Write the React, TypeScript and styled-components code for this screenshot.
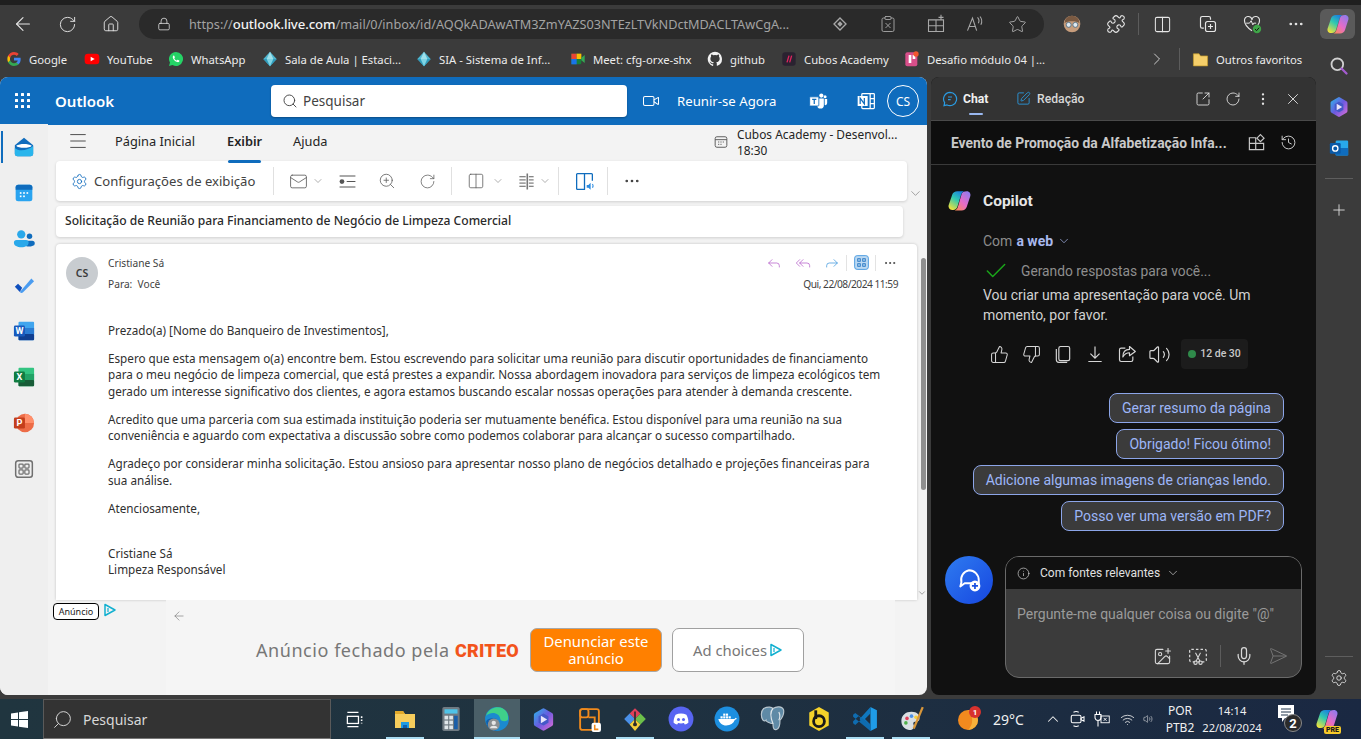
import { useId } from 'react'
import type { ReactNode } from 'react'
import styled, { createGlobalStyle } from 'styled-components'
import {
  ArrowLeft,
  Check,
  ChevronDown,
  ChevronRight,
  ChevronUp,
  ClipboardX,
  Columns2,
  Ellipsis,
  EllipsisVertical,
  Forward,
  History,
  House,
  ImagePlus,
  Info,
  Lock,
  Mail,
  Menu,
  Mic,
  Plus,
  Puzzle,
  Reply,
  ReplyAll,
  RotateCw,
  Search,
  SendHorizontal,
  Settings,
  SquareArrowOutUpRight,
  SquarePen,
  Star,
  ThumbsDown,
  ThumbsUp,
  Video,
  Volume2,
  Wifi,
  X,
  ZoomIn,
} from 'lucide-react'

const SEGOE = '"Noto Sans", "Open Sans", sans-serif'
const ROBOTO = 'Roboto, "Noto Sans", sans-serif'

const GlobalStyle = createGlobalStyle`
  html, body {
    margin: 0;
    padding: 0;
    overflow: hidden;
    background: #3b3b3b;
  }
  * {
    box-sizing: border-box;
  }
`

const Page = styled.div`
  width: 1361px;
  height: 739px;
  display: flex;
  flex-direction: column;
  overflow: hidden;
  background: #3b3b3b;
  font-family: ${SEGOE};
`

const Gap = styled.div<{ $w: number }>`
  width: ${p => p.$w}px;
  flex: none;
`

/* browser chrome */

const TabStrip = styled.div`
  height: 5px;
  flex: none;
  background: #1f1f1f;
`

const BrowserBar = styled.div`
  height: 38px;
  flex: none;
  display: flex;
  align-items: center;
  padding-left: 1px;
  color: #e6e6e6;
`

const Slot = styled.div<{ $w?: number }>`
  width: ${p => p.$w ?? 44}px;
  height: 30px;
  flex: none;
  display: flex;
  align-items: center;
  justify-content: center;
`

const AddressBar = styled.div`
  width: 905px;
  height: 30px;
  margin: 0 6px;
  flex: none;
  display: flex;
  align-items: center;
  padding-left: 18px;
  border-radius: 15px;
  background: #2a2a2a;
  color: #c4c4c4;
`

const Url = styled.div`
  width: 627px;
  flex: none;
  margin-left: 18px;
  font-size: 12.7px;
  white-space: nowrap;
  color: #a3a3a3;

  b {
    font-size: 13.2px;
    font-weight: 500;
    letter-spacing: -0.1px;
    color: #f2f2f2;
  }
`

const VBar = styled.div`
  width: 1px;
  height: 22px;
  flex: none;
  background: #5c5c5c;
`

const CopilotButton = styled.div`
  width: 35px;
  height: 30px;
  margin-left: 2px;
  flex: none;
  display: flex;
  align-items: center;
  justify-content: center;
  border-radius: 6px;
  background: #5a5a5a;
`

const Stage = styled.div`
  flex: 1;
  min-height: 0;
  display: flex;
`

const LeftColumn = styled.div`
  width: 1316px;
  flex: none;
  display: flex;
  flex-direction: column;
`

const Bookmarks = styled.div`
  height: 34px;
  flex: none;
  display: flex;
  align-items: center;
  padding: 0 0 2px 6px;
`

const Bookmark = styled.div<{ $w: number }>`
  width: ${p => p.$w}px;
  flex: none;
  display: flex;
  align-items: center;
  gap: 7px;
  font-size: 11.3px;
  color: #ececec;
  white-space: nowrap;
`

const Workspace = styled.div`
  flex: 1;
  min-height: 0;
  display: flex;
  gap: 4px;
  padding-bottom: 4px;
`

/* outlook */

const OutlookWindow = styled.div`
  width: 927px;
  flex: none;
  display: flex;
  flex-direction: column;
  border-radius: 8px;
  overflow: hidden;
  background: #f3f3f3;
`

const OutlookHeader = styled.div`
  height: 48px;
  flex: none;
  display: flex;
  align-items: center;
  padding-left: 14px;
  background: #0f6cbd;
  color: #fff;
`

const AppName = styled.div`
  margin-left: 23px;
  width: 216px;
  flex: none;
  font-size: 15px;
  font-weight: 600;
`

const SearchBox = styled.div`
  width: 356px;
  height: 32px;
  flex: none;
  display: flex;
  align-items: center;
  gap: 5px;
  padding-left: 11px;
  border-radius: 4px;
  background: #fff;
  color: #424242;
  font-size: 13.5px;
  box-shadow: 0 1px 2px rgba(0, 0, 0, 0.3);
`

const MeetNow = styled.div`
  margin-left: 15px;
  width: 160px;
  flex: none;
  display: flex;
  align-items: center;
  gap: 17px;
  font-size: 13.2px;
  white-space: nowrap;
`

const HeaderIcon = styled.div<{ $w: number }>`
  width: ${p => p.$w}px;
  flex: none;
  display: flex;
  justify-content: center;
`

const Persona = styled.div`
  width: 32px;
  height: 32px;
  flex: none;
  display: flex;
  align-items: center;
  justify-content: center;
  border: 1px solid #fff;
  border-radius: 50%;
  font-size: 12px;
`

const OutlookBody = styled.div`
  flex: 1;
  min-height: 0;
  display: flex;
`

const Rail = styled.div`
  width: 48px;
  flex: none;
  display: flex;
  flex-direction: column;
  margin-top: -1px;
  background: #efefef;
`

const RailItem = styled.div<{ $active?: boolean }>`
  position: relative;
  height: 46px;
  flex: none;
  display: flex;
  align-items: center;
  justify-content: center;

  ${p =>
    p.$active &&
    `&::before {
      content: '';
      position: absolute;
      left: 1px;
      top: 7px;
      width: 2px;
      height: 32px;
      background: #0f6cbd;
    }`}
`

const Content = styled.div`
  flex: 1;
  min-width: 0;
  display: flex;
  flex-direction: column;
`

const RibbonTabs = styled.div`
  height: 36px;
  flex: none;
  display: flex;
  align-items: center;
  padding: 0 0 4px 19px;
`

const RibbonTab = styled.div<{ $w: number; $active?: boolean }>`
  position: relative;
  width: ${p => p.$w}px;
  flex: none;
  font-size: 12.8px;
  font-weight: ${p => (p.$active ? 600 : 400)};
  color: #242424;
  white-space: nowrap;

  ${p =>
    p.$active &&
    `&::after {
      content: '';
      position: absolute;
      left: 1px;
      top: 28px;
      width: 33px;
      height: 3px;
      border-radius: 2px;
      background: #0f6cbd;
    }`}
`

const UpNext = styled.div`
  margin: 2px 0 0 auto;
  width: 213px;
  flex: none;
  display: flex;
  align-items: center;
  gap: 9px;
  font-size: 11.9px;
  line-height: 16px;
  color: #242424;
  white-space: nowrap;
`

const ToolRow = styled.div`
  height: 40px;
  flex: none;
  display: flex;
  align-items: flex-end;
  padding-left: 8px;
`

const ToolCard = styled.div`
  width: 851px;
  height: 40px;
  flex: none;
  display: flex;
  align-items: center;
  padding-left: 15px;
  border-radius: 4px;
  background: #fff;
  box-shadow: 0 1px 3px rgba(0, 0, 0, 0.15);
  color: #616161;
`

const ToolLabel = styled.div`
  margin-left: 6px;
  width: 179px;
  flex: none;
  font-size: 13.1px;
  color: #424242;
  white-space: nowrap;
`

const ToolSep = styled.div<{ $after: number }>`
  width: 1px;
  height: 28px;
  flex: none;
  margin-right: ${p => p.$after}px;
  background: #e0e0e0;
`

const Tool = styled.div<{ $w: number }>`
  width: ${p => p.$w}px;
  flex: none;
  display: flex;
  align-items: center;
  justify-content: center;
`

const ScrollHint = styled.div`
  margin-left: 1px;
  color: #707070;
  display: flex;
`

const SubjectCard = styled.div`
  width: 847px;
  height: 31px;
  flex: none;
  margin: 5px 0 7px 8px;
  display: flex;
  align-items: center;
  padding: 0 0 3px 9px;
  border-radius: 4px;
  background: #fff;
  box-shadow: 0 1px 3px rgba(0, 0, 0, 0.15);
  font-size: 12.1px;
  font-weight: 500;
  color: #2a2a2a;
`

const MessageRow = styled.div`
  height: 356px;
  flex: none;
  display: flex;
  padding-left: 8px;
`

const MessageCard = styled.div`
  width: 861px;
  flex: none;
  overflow: hidden;
  padding: 8px 19px 0 10px;
  border-radius: 4px 4px 0 0;
  background: #fff;
  box-shadow: 0 0 3px rgba(0, 0, 0, 0.2);
`

const MessageHead = styled.div`
  display: flex;
  gap: 10px;
`

const Avatar = styled.div`
  width: 32px;
  height: 32px;
  margin-top: 5px;
  flex: none;
  display: flex;
  align-items: center;
  justify-content: center;
  border-radius: 50%;
  background: #c8ccd0;
  font-size: 10.5px;
  font-weight: 600;
  color: #3a3a3a;
`

const Meta = styled.div`
  flex: 1;
  display: flex;
  flex-direction: column;
  font-size: 10.2px;
  color: #424242;
`

const MetaLine = styled.div`
  display: flex;
  align-items: center;
  justify-content: space-between;
  height: 21px;
`

const SentAt = styled.span`
  letter-spacing: -0.5px;
`

const Actions = styled.div`
  display: flex;
  align-items: center;
`

const Action = styled.div<{ $w: number }>`
  width: ${p => p.$w}px;
  flex: none;
  display: flex;
  justify-content: center;
`

const ActionSep = styled.div`
  width: 1px;
  height: 16px;
  flex: none;
  background: #e3e3e3;
`

const MailText = styled.div`
  margin: 28px 0 0 42px;
  font-size: 11.7px;
  line-height: 16.4px;
  color: #2f2f2f;
  white-space: nowrap;

  p {
    margin: 0 0 11.6px;
  }

  p:last-child {
    margin-top: 12.4px;
  }
`

const ScrollTrack = styled.div`
  width: 10px;
  flex: none;
  display: flex;
  flex-direction: column;
  align-items: center;
  justify-content: space-between;
  padding: 14px 0 2px;
`

const ScrollThumb = styled.div`
  width: 5px;
  height: 232px;
  margin-left: 2px;
  border-radius: 3px;
  background: #8f8f8f;
`

const AdRow = styled.div`
  flex: 1;
  min-height: 0;
  display: flex;
`

const AdSide = styled.div`
  width: 118px;
  flex: none;
  display: flex;
  align-items: flex-start;
  gap: 4px;
  padding: 3px 0 0 5px;
`

const AdBadge = styled.div`
  width: 46px;
  height: 17px;
  flex: none;
  display: flex;
  align-items: center;
  justify-content: center;
  border: 1px solid #000;
  border-radius: 4px;
  background: #fff;
  font-size: 9px;
  color: #222;
`

const AdPanel = styled.div`
  width: 729px;
  flex: none;
  display: flex;
  flex-direction: column;
  padding: 9px 0 0 6px;
  background: #f5f5f5;
`

const AdInner = styled.div`
  display: flex;
  align-items: center;
  margin: 5px 0 0 84px;
`

const AdText = styled.div`
  width: 199px;
  flex: none;
  font-size: 18px;
  letter-spacing: 0.55px;
  color: #777;
  white-space: nowrap;
`

const Criteo = styled.div`
  width: 75px;
  flex: none;
  font-family: ${ROBOTO};
  font-size: 18px;
  font-weight: 900;
  letter-spacing: 0.2px;
  color: #f2541b;
`

const ReportButton = styled.div`
  width: 132px;
  height: 44px;
  flex: none;
  display: flex;
  align-items: center;
  justify-content: center;
  text-align: center;
  border: 1px solid #a8a8a8;
  border-radius: 7px;
  background: #ff8000;
  color: #fff;
  font-size: 14.8px;
  line-height: 17px;
`

const ChoicesButton = styled.div`
  width: 132px;
  height: 44px;
  margin-left: 10px;
  flex: none;
  display: flex;
  align-items: center;
  justify-content: center;
  gap: 2px;
  border: 1px solid #a0a0a0;
  border-radius: 7px;
  background: #fff;
  color: #777;
  font-size: 14.8px;
`

/* copilot */

const CopilotPanel = styled.div`
  width: 385px;
  flex: none;
  display: flex;
  flex-direction: column;
  border-radius: 8px;
  overflow: hidden;
  background: #111;
  font-family: ${ROBOTO};
`

const PanelTop = styled.div`
  height: 44px;
  flex: none;
  display: flex;
  align-items: center;
  padding-left: 11px;
  border-bottom: 1px solid #4a4a4a;
  background: #333;
  color: #e4e4e4;
`

const PanelTab = styled.div<{ $active?: boolean; $w: number }>`
  position: relative;
  width: ${p => p.$w}px;
  flex: none;
  display: flex;
  align-items: center;
  gap: ${p => (p.$active ? 5 : 6)}px;
  font-size: 12.2px;
  font-weight: ${p => (p.$active ? 700 : 500)};
  color: ${p => (p.$active ? '#f0f0f0' : '#d8d8d8')};

  ${p =>
    p.$active &&
    `&::after {
      content: '';
      position: absolute;
      left: 27px;
      top: 22px;
      width: 14px;
      height: 2px;
      border-radius: 1px;
      background: #9ab8f0;
    }`}
`

const PanelTools = styled.div`
  margin-left: auto;
  display: flex;
  align-items: center;
  padding-right: 8px;
`

const PanelTool = styled.div`
  width: 30px;
  flex: none;
  display: flex;
  justify-content: center;
`

const Conversation = styled.div`
  height: 44px;
  flex: none;
  display: flex;
  align-items: center;
  padding-left: 20px;
  border-bottom: 1px solid #3a3a3a;
  background: #0e0e0e;
  color: #c9c9c9;
`

const ConversationTitle = styled.div`
  width: 296px;
  flex: none;
  font-size: 13.85px;
  font-weight: 700;
  white-space: nowrap;
`

const Bot = styled.div`
  display: flex;
  align-items: center;
  gap: 11px;
  margin: 23px 0 0 16px;
  font-size: 15.5px;
  font-weight: 700;
  color: #e6e6e6;
`

const Answer = styled.div`
  margin: 18px 0 0 52px;
  font-size: 14px;
  line-height: 20px;
  color: #d2d2d2;
`

const Source = styled.div`
  display: flex;
  align-items: center;
  gap: 4px;
  color: #8c8c8c;

  b {
    font-weight: 700;
    color: #a9b9ee;
  }
`

const Progress = styled.div`
  display: flex;
  align-items: center;
  gap: 12px;
  margin: 7px 0 1px;
  font-size: 13.8px;
  color: #8e8e8e;
`

const Feedback = styled.div`
  display: flex;
  align-items: center;
  margin-top: 14px;
  color: #d6d6d6;
`

const FeedbackIcon = styled.div`
  width: 32px;
  flex: none;
  display: flex;
  justify-content: center;
`

const Counter = styled.div`
  width: 67px;
  height: 30px;
  margin-left: 6px;
  flex: none;
  display: flex;
  align-items: center;
  justify-content: center;
  gap: 4px;
  border-radius: 4px;
  background: #1c1c1c;
  font-size: 10.5px;
  font-weight: 500;
  color: #c8c8c8;

  i {
    width: 8px;
    height: 8px;
    border-radius: 50%;
    background: #2f8a4a;
  }
`

const Chips = styled.div`
  display: flex;
  flex-direction: column;
  align-items: flex-end;
  gap: 6px;
  margin: 24px 32px 0 0;
`

const Chip = styled.div`
  height: 30px;
  flex: none;
  display: flex;
  align-items: center;
  padding: 0 12px;
  border: 1px solid #8ca5e8;
  border-radius: 8px;
  background: #3b3b3b;
  font-size: 14px;
  color: #9db6f8;
`

const ComposerRow = styled.div`
  display: flex;
  gap: 12px;
  margin: 25px 0 0 14px;
`

const NewTopic = styled.div`
  width: 48px;
  height: 48px;
  flex: none;
  display: flex;
  align-items: center;
  justify-content: center;
  border-radius: 50%;
  background: linear-gradient(135deg, #2f7cf0, #1646e0);
`

const Composer = styled.div`
  width: 297px;
  height: 122px;
  flex: none;
  display: flex;
  flex-direction: column;
  border: 1px solid #6a6a6a;
  border-radius: 14px;
  overflow: hidden;
  background: #3b3b3b;
`

const ComposerHead = styled.div`
  height: 32px;
  flex: none;
  display: flex;
  align-items: center;
  gap: 6px;
  padding-left: 11px;
  background: #111;
  font-size: 12px;
  color: #e0e0e0;
`

const ComposerHeadLabel = styled.span`
  margin-left: 4px;
`

const Placeholder = styled.div`
  margin: 17px 0 0 11px;
  font-size: 14px;
  color: #9a9a9a;
`

const ComposerTools = styled.div`
  margin-top: 23px;
  display: flex;
  align-items: center;
  padding-left: 138px;
  color: #d8d8d8;
`

const ComposerTool = styled.div<{ $w: number }>`
  width: ${p => p.$w}px;
  flex: none;
  display: flex;
  justify-content: center;
`

/* edge sidebar */

const EdgeSidebar = styled.div`
  width: 45px;
  flex: none;
  display: flex;
  flex-direction: column;
  align-items: center;
  padding: 2px 0 1px;
  color: #e0e0e0;
`

const SideIcon = styled.div`
  height: 41px;
  flex: none;
  display: flex;
  align-items: center;
  justify-content: center;
`

const SideRule = styled.div<{ $top?: string; $bottom?: string }>`
  width: 28px;
  height: 1px;
  flex: none;
  margin-top: ${p => p.$top ?? '0'};
  margin-bottom: ${p => p.$bottom ?? '0'};
  background: #5e5e5e;
`

/* taskbar */

const Taskbar = styled.div`
  height: 40px;
  flex: none;
  display: flex;
  align-items: center;
  background: linear-gradient(90deg, #20353f, #1f3240 45%, #1a2842);
  color: #f0f0f0;
`

const StartButton = styled.div`
  width: 43px;
  flex: none;
  display: flex;
  justify-content: center;
  padding-right: 4px;
`

const TaskSearch = styled.div`
  width: 288px;
  height: 40px;
  flex: none;
  display: flex;
  align-items: center;
  gap: 10px;
  padding-left: 8px;
  border: 1px solid #5a5a5a;
  border-bottom-color: #777;
  background: #333;
  font-size: 14px;
  color: #d8d8d8;
`

const MirroredSearch = styled(Search)`
  transform: scaleX(-1);
`

const TaskApp = styled.div<{ $active?: boolean; $running?: boolean }>`
  position: relative;
  width: 46px;
  height: 40px;
  flex: none;
  display: flex;
  align-items: center;
  justify-content: center;
  background: ${p => (p.$active ? '#4a5f68' : 'transparent')};

  ${p =>
    (p.$running || p.$active) &&
    `&::after {
      content: '';
      position: absolute;
      left: ${p.$active ? 0 : 4}px;
      right: ${p.$active ? 0 : 4}px;
      bottom: 0;
      height: 2px;
      background: #a9dcf2;
    }`}
`

const Weather = styled.div`
  width: 64px;
  flex: none;
  display: flex;
  align-items: center;
  gap: 10px;
  font-size: 14px;
  white-space: nowrap;
`

const TrayIcon = styled.div<{ $w: number }>`
  width: ${p => p.$w}px;
  flex: none;
  display: flex;
  justify-content: center;
`

const Stacked = styled.div<{ $w: number; $size: number }>`
  width: ${p => p.$w}px;
  flex: none;
  text-align: center;
  font-size: ${p => p.$size}px;
  line-height: 17px;
  white-space: nowrap;
`

/* drawings */

type SvgProps = { size?: number; children?: ReactNode }

const PlainSvg = styled.svg`
  display: block;
  flex: none;
`

const Draw = ({ size = 20, children }: SvgProps) => (
  <PlainSvg width={size} height={size} viewBox="0 0 24 24" fill="none">
    {children}
  </PlainSvg>
)

const CopilotLogo = ({ size = 24 }: { size?: number }) => {
  const id = useId()
  return (
    <Draw size={size}>
      <defs>
        <linearGradient id={`${id}a`} x1="0.75" y1="0" x2="0.2" y2="1">
          <stop offset="0" stopColor="#1a7ee0" />
          <stop offset="0.45" stopColor="#30c9b0" />
          <stop offset="1" stopColor="#f2e23a" />
        </linearGradient>
        <linearGradient id={`${id}b`} x1="0.9" y1="0" x2="0.1" y2="1">
          <stop offset="0" stopColor="#8a7cf0" />
          <stop offset="0.55" stopColor="#e66cc8" />
          <stop offset="1" stopColor="#fb8a5a" />
        </linearGradient>
      </defs>
      <path d="M10 3h6.500c-1.500.5-2.500 2-3 3.500L10 18c-.6 2-2 3-4 3H5c-2.600 0-4-2.200-3.400-4.600L5 6.500C5.600 4.300 7.500 3 10 3z" fill={`url(#${id}a)`} />
      <path d="M19 3c2.500 0 4 2.200 3.400 4.600L19 18c-.7 2.200-2.500 3.500-5 3.500H7.500c1.500-.5 2.500-2 3-3.500L14 6c.6-2 2-3 5-3z" fill={`url(#${id}b)`} />
    </Draw>
  )
}

const GoogleLogo = () => (
  <Draw size={16}>
    <path d="M22 12.200c0-.7-.1-1.400-.2-2H12v4h5.600c-.3 1.300-1 2.400-2.100 3.100v2.600h3.400c2-1.800 3.100-4.500 3.100-7.700z" fill="#4285f4" />
    <path d="M12 22.500c2.800 0 5.200-.9 6.900-2.600l-3.400-2.600c-.9.600-2.100 1-3.500 1-2.700 0-5-1.800-5.800-4.300H3.100v2.700c1.700 3.500 5.100 5.800 8.900 5.800z" fill="#34a853" />
    <path d="M6.200 14c-.4-1.300-.4-2.700 0-4V7.300H3.100c-1.400 2.900-1.400 6.500 0 9.400z" fill="#fbbc05" />
    <path d="M12 5.800c1.500 0 2.900.5 4 1.600l3-3C17.100 2.600 14.700 1.500 12 1.500c-3.800 0-7.200 2.300-8.900 5.800L6.200 10C7 7.500 9.300 5.800 12 5.800z" fill="#ea4335" />
  </Draw>
)

const YouTubeLogo = () => (
  <Draw size={16}>
    <rect x="1" y="4" width="22" height="16" rx="5" fill="#f00" />
    <path d="M10 8.500l6 3.500-6 3.500z" fill="#fff" />
  </Draw>
)

const WhatsAppLogo = () => (
  <Draw size={16}>
    <path d="M12 1.500a10.500 10.500 0 0 0-9 15.900L1.500 22.500l5.300-1.400A10.500 10.500 0 1 0 12 1.500z" fill="#25d366" />
    <path d="M8.500 6.800c-.9.500-1.600 1.700-1.200 3.200.7 3 3.600 5.800 6.600 6.600 1.500.4 2.700-.3 3.200-1.300.2-.5 0-.9-.3-1l-2-1c-.4-.1-.7 0-.9.300l-.6.800c-2-.6-3.100-1.700-3.900-3.700l.7-.7c.2-.3.300-.6.100-.9l-.9-2c-.2-.4-.6-.5-.8-.3z" fill="#fff" />
  </Draw>
)

const DiamondLogo = () => (
  <Draw size={16}>
    <path d="M12 1l10 11-10 11L2 12z" fill="#4fb6d0" />
    <path d="M12 1l5 11H7z" fill="#9fe0ea" />
    <path d="M2 12h20l-10 11z" fill="#2f9cbc" />
    <path d="M7 12h10l-5 11z" fill="#7fd4e4" />
  </Draw>
)

const MeetLogo = () => (
  <Draw size={16}>
    <rect x="2" y="4" width="15" height="16" rx="2" fill="#188038" />
    <path d="M2 4h8v8H2z" fill="#ea4335" />
    <path d="M10 4h7v8h-7z" fill="#fbbc04" />
    <path d="M2 12h8v8H2z" fill="#1a73e8" />
    <path d="M17 10l5-4v12l-5-4z" fill="#34a853" />
  </Draw>
)

const GithubLogo = () => (
  <Draw size={16}>
    <path d="M12 1a11 11 0 0 0-3.500 21.400c.6.100.8-.2.800-.5v-2c-3.100.7-3.700-1.400-3.700-1.400-.5-1.300-1.200-1.600-1.200-1.600-1-.7.100-.7.100-.7 1.100.1 1.700 1.100 1.700 1.100 1 1.700 2.600 1.200 3.200.9.100-.7.400-1.200.7-1.500-2.500-.3-5-1.200-5-5.500 0-1.200.4-2.200 1.100-3-.1-.3-.5-1.400.1-2.900 0 0 .9-.3 3 1.100a10.500 10.500 0 0 1 5.500 0c2.100-1.400 3-1.100 3-1.100.6 1.500.2 2.600.1 2.900.7.800 1.100 1.800 1.100 3 0 4.300-2.600 5.200-5.100 5.500.4.300.8 1 .8 2v3c0 .3.2.6.800.5A11 11 0 0 0 12 1z" fill="#f2f2f2" />
  </Draw>
)

const CubosLogo = () => (
  <Draw size={16}>
    <rect x="2" y="2" width="20" height="20" rx="4" fill="#2a2230" />
    <path d="M9 17l3-10M13 17l3-10" stroke="#e0245e" strokeWidth="2" />
  </Draw>
)

const ChallengeLogo = () => (
  <Draw size={16}>
    <rect x="2" y="2" width="18" height="21" rx="3" fill="#d84f8a" />
    <path d="M7 6h4v12H7z" fill="#fff" />
    <path d="M13 6h4v6h-4z" fill="#fff" />
    <circle cx="18" cy="4.500" r="4" fill="#f2562f" />
  </Draw>
)

const FolderLogo = () => (
  <Draw size={17}>
    <path d="M2 4h8l2 3h10v14H2z" fill="#f5cf6a" stroke="#c49a2c" />
  </Draw>
)

const WaffleIcon = () => (
  <PlainSvg width="18" height="18" viewBox="0 0 18 18" fill="#fff">
    {[2, 8, 14].flatMap(y => [2, 8, 14].map(x => <rect key={`${x}-${y}`} x={x - 1} y={y - 1} width="3" height="3" rx="0.6" />))}
  </PlainSvg>
)

const TeamsIcon = () => (
  <Draw size={20}>
    <circle cx="16" cy="5.500" r="2.500" fill="#fff" />
    <circle cx="20.500" cy="7" r="1.800" fill="#fff" />
    <path d="M11 9h8v8a4 4 0 0 1-8 0z" fill="#fff" />
    <path d="M20 9.500h3v5a2.500 2.500 0 0 1-3 2.400z" fill="#fff" />
    <rect x="2" y="7" width="11" height="11" rx="1" fill="#fff" stroke="#0f6cbd" />
    <path d="M5 10h5M7.500 10v5.500" stroke="#0f6cbd" strokeWidth="1.500" />
  </Draw>
)

const OneNoteIcon = () => (
  <Draw size={20}>
    <rect x="7" y="3" width="15" height="18" rx="1" stroke="#fff" strokeWidth="1.500" />
    <path d="M17 3v18M17 9h5M17 15h5" stroke="#fff" strokeWidth="1.500" />
    <rect x="2" y="6" width="12" height="12" fill="#fff" />
    <path d="M5 15.500v-7l5 7v-7" stroke="#0f6cbd" strokeWidth="1.500" />
  </Draw>
)

const RailMail = () => (
  <Draw size={22}>
    <path d="M2 10L12 2l10 8v9a3 3 0 0 1-3 3H5a3 3 0 0 1-3-3z" fill="#0f6cbd" />
    <path d="M3.500 10.500c4-2.500 13-2.500 17 0-2 3-15 3-17 0z" fill="#fff" />
    <path d="M2 13c5 5 15 2 20-2v8a3 3 0 0 1-3 3H5a3 3 0 0 1-3-3z" fill="#29b5ec" />
  </Draw>
)

const RailCalendar = () => (
  <Draw size={20}>
    <rect x="2" y="2" width="20" height="20" rx="3" fill="#2aa4f0" />
    <path d="M2 8V5a3 3 0 0 1 3-3h14a3 3 0 0 1 3 3v3z" fill="#0f6cbd" />
    <g fill="#fff">
      <rect x="7" y="11" width="2" height="2" />
      <rect x="11" y="11" width="2" height="2" />
      <rect x="15" y="11" width="2" height="2" />
      <rect x="7" y="15" width="2" height="2" />
      <rect x="11" y="15" width="2" height="2" />
    </g>
  </Draw>
)

const RailPeople = () => (
  <Draw size={22}>
    <circle cx="9" cy="7" r="4.500" fill="#29a8ea" />
    <circle cx="18" cy="9" r="3" fill="#0f6cbd" />
    <path d="M12 14h9a2.500 2.500 0 0 1 0 5.500c-2 1-5 1-7 0z" fill="#0f6cbd" />
    <path d="M1 16a3 3 0 0 1 3-3h10a3 3 0 0 1 3 3c0 3-3.500 5-8 5s-8-2-8-5z" fill="#29a8ea" />
  </Draw>
)

const RailTodo = () => (
  <Draw size={22}>
    <path d="M2 14l3.500-3.500L10 15l-2.500 4.500z" fill="#0f4fbd" />
    <path d="M7.500 19.500L20 5l3 3L11 20a2.500 2.500 0 0 1-3.500-.5z" fill="#4a9cf0" />
  </Draw>
)

const OfficeTile = ({ letter, dark, colors }: { letter: string; dark: string; colors: string[] }) => (
  <Draw size={22}>
    <rect x="6" y="2" width="17" height="20" rx="1" fill={colors[0]} />
    <rect x="6" y="8.700" width="17" height="6.700" fill={colors[1]} />
    <rect x="6" y="15.400" width="17" height="6.600" rx="1" fill={colors[2]} />
    <rect x="1" y="6" width="12" height="12" rx="1.500" fill={dark} />
    <text x="7" y="15.500" textAnchor="middle" fontSize="10" fontWeight="700" fontFamily="Roboto, sans-serif" fill="#fff">
      {letter}
    </text>
  </Draw>
)

const RailPowerPoint = () => (
  <Draw size={22}>
    <circle cx="13" cy="12" r="10" fill="#ed6c47" />
    <path d="M13 2a10 10 0 0 1 10 10H13z" fill="#ff8f6b" />
    <rect x="1" y="6" width="12" height="12" rx="1.500" fill="#c43e1c" />
    <text x="7" y="15.500" textAnchor="middle" fontSize="10" fontWeight="700" fontFamily="Roboto, sans-serif" fill="#fff">
      P
    </text>
  </Draw>
)

const RailApps = () => (
  <Draw size={20}>
    <rect x="2" y="2" width="20" height="20" rx="3" stroke="#707070" strokeWidth="1.800" />
    <rect x="6" y="6" width="5" height="5" rx="1" stroke="#707070" strokeWidth="1.500" />
    <rect x="13" y="6" width="5" height="5" rx="1" stroke="#707070" strokeWidth="1.500" />
    <rect x="6" y="13" width="5" height="5" rx="1" stroke="#707070" strokeWidth="1.500" />
    <rect x="13" y="13" width="5" height="5" rx="1" stroke="#707070" strokeWidth="1.500" />
  </Draw>
)

const ListIcon = () => (
  <Draw size={19}>
    <circle cx="5" cy="12" r="3" fill="#555" />
    <path d="M2 5h20M11 12h11M2 19h20" stroke="#555" strokeWidth="1.300" />
  </Draw>
)

const LinesIcon = () => (
  <Draw size={19}>
    <path d="M3 6h8M3 10h8M3 14h8M3 18h8M15 6h6M15 10h6M15 14h6M15 18h6" stroke="#555" strokeWidth="1.200" />
    <path d="M13 2v20" stroke="#777" strokeWidth="2" />
  </Draw>
)

const ImmersiveIcon = () => (
  <Draw size={21}>
    <path d="M12 3H4a1 1 0 0 0-1 1v16a1 1 0 0 0 1 1h8zM12 3h8a1 1 0 0 1 1 1v7" stroke="#0f6cbd" strokeWidth="1.500" strokeLinejoin="round" />
    <path d="M14.500 16h2l2.500-2.500v8L16.500 19h-2z" fill="#2a8ae0" />
    <path d="M21 15c1 1 1 3 0 4" stroke="#2a8ae0" strokeWidth="1.300" />
  </Draw>
)

const GridChip = () => (
  <PlainSvg width="15" height="15" viewBox="0 0 24 24" fill="none">
    <rect x="1" y="1" width="22" height="22" rx="4" fill="#bcd9f2" stroke="#4a9ae0" strokeWidth="1.500" />
    {[6, 14].flatMap(y => [6, 14].map(x => <rect key={`${x}-${y}`} x={x} y={y} width="4" height="4" stroke="#1a6fc0" strokeWidth="1.400" />))}
  </PlainSvg>
)

const AdChoices = ({ size = 14 }: { size?: number }) => (
  <PlainSvg width={size} height={size} viewBox="0 0 14 14" fill="none">
    <path d="M2 1.500L12 7 2 12.500z" stroke="#12b0d0" strokeWidth="1.500" strokeLinejoin="round" />
    <path d="M5 5v4" stroke="#12b0d0" strokeWidth="1.200" />
  </PlainSvg>
)

const ChatBubble = () => (
  <Draw size={16}>
    <path d="M12 2a10 10 0 1 1-4.500 19L3 22l1-4.500A10 10 0 0 1 12 2z" stroke="#2a9ae0" strokeWidth="1.800" />
    <path d="M9 9h6M9 13h4" stroke="#2a9ae0" strokeWidth="1.800" />
  </Draw>
)

const GridPlus = () => (
  <Draw size={20}>
    <path d="M3 7h18v14H3zM12 7v14M3 14h18" stroke="#a8a8a8" strokeWidth="1.300" />
    <path d="M18 1v6M15 4h6" stroke="#a8a8a8" strokeWidth="1.300" />
  </Draw>
)

const WidgetIcon = () => (
  <Draw size={19}>
    <path d="M3 6h8v15H3zM11 13h10v8H11zM3 13h18" stroke="#c8c8c8" strokeWidth="1.500" />
    <path d="M17 2l4.500 4.500L17 11l-4.500-4.500z" stroke="#c8c8c8" strokeWidth="1.500" />
  </Draw>
)

const PagesIcon = () => (
  <Draw size={20}>
    <rect x="7" y="3" width="13" height="17" rx="2" stroke="currentColor" strokeWidth="1.400" />
    <path d="M4 6v13a3 3 0 0 0 3 3h10" stroke="currentColor" strokeWidth="1.400" />
  </Draw>
)

const SaveIcon = () => (
  <Draw size={20}>
    <path d="M12 3v14M6.500 11.500L12 17l5.500-5.500M4 21h16" stroke="currentColor" strokeWidth="1.400" />
  </Draw>
)

const ShareOutIcon = () => (
  <Draw size={20}>
    <path d="M10 5H5a2 2 0 0 0-2 2v12a2 2 0 0 0 2 2h12a2 2 0 0 0 2-2v-4" stroke="currentColor" strokeWidth="1.400" />
    <path d="M22 9l-7-6v3.500c-5 0-8 3-8 9 2-3.500 4.500-5 8-5V14z" stroke="currentColor" strokeWidth="1.400" strokeLinejoin="round" />
  </Draw>
)

const ReadAloud = () => (
  <Draw size={20}>
    <path d="M3 20L9 5l5 15M5 15h8" stroke="#a8a8a8" strokeWidth="1.300" />
    <path d="M15 4c2 2 2 5 1 7M18 3c2.500 3 2.500 7 1 10" stroke="#a8a8a8" strokeWidth="1.300" />
  </Draw>
)

const AvatarFace = () => (
  <Draw size={20}>
    <circle cx="12" cy="12" r="10" fill="#c79d7c" />
    <path d="M3 11a9 9 0 0 1 18 0c-4-3-14-3-18 0z" fill="#7a5a42" />
    <circle cx="8" cy="13" r="3" fill="#dfe9f0" stroke="#4a6a80" />
    <circle cx="16" cy="13" r="3" fill="#dfe9f0" stroke="#4a6a80" />
  </Draw>
)

const CollectionIcon = () => (
  <Draw size={20}>
    <path d="M7 17H5a2 2 0 0 1-2-2V5a2 2 0 0 1 2-2h8a2 2 0 0 1 2 2v2" stroke="#e6e6e6" strokeWidth="1.400" />
    <rect x="9" y="9" width="12" height="12" rx="2.500" stroke="#e6e6e6" strokeWidth="1.400" />
    <path d="M15 12v6M12 15h6" stroke="#e6e6e6" strokeWidth="1.400" />
  </Draw>
)

const HealthIcon = () => (
  <Draw size={20}>
    <path d="M12 20S3 14 3 8a4.500 4.500 0 0 1 9-1 4.500 4.500 0 0 1 9 1c0 2-1 4-2 5" stroke="#e6e6e6" strokeWidth="1.400" />
    <path d="M5 11h4l2-3 2 5 1-2h3" stroke="#e6e6e6" strokeWidth="1.200" />
    <circle cx="18" cy="18" r="5" fill="#3fa648" />
    <path d="M15.500 18l2 2 3-3.500" stroke="#111" strokeWidth="1.200" />
  </Draw>
)

const BingSearch = () => (
  <Draw size={20}>
    <circle cx="10" cy="10" r="7" stroke="#d0d0d0" strokeWidth="2.200" />
    <path d="M15 15l6 6" stroke="#a45cd0" strokeWidth="2.800" strokeLinecap="round" />
  </Draw>
)

const HexCopilot = ({ size = 22 }: { size?: number }) => {
  const id = useId()
  return (
    <Draw size={size}>
      <defs>
        <linearGradient id={id} x1="0" y1="0" x2="1" y2="1">
          <stop offset="0" stopColor="#38a3e8" />
          <stop offset="0.5" stopColor="#6a5ae0" />
          <stop offset="1" stopColor="#c86ad8" />
        </linearGradient>
      </defs>
      <path d="M12 3.500l7 4.200v8.600l-7 4.200-7-4.200V7.700z" fill="#4458c8" stroke={`url(#${id})`} strokeWidth="4.500" strokeLinejoin="round" />
      <path d="M9.500 8.500l6 3.500-6 3.500z" fill="#e8e4fa" />
    </Draw>
  )
}

const OutlookLogo = ({ size = 20 }: { size?: number }) => (
  <Draw size={size}>
    <rect x="8" y="3" width="15" height="18" rx="1.500" fill="#28a8ea" />
    <path d="M8 12h15v9H8z" fill="#0f6cbd" />
    <rect x="1" y="6" width="13" height="13" rx="1.500" fill="#0a5aa8" />
    <circle cx="7.500" cy="12.500" r="3.200" stroke="#fff" strokeWidth="1.600" />
  </Draw>
)

const NewTopicIcon = () => (
  <Draw size={26}>
    <path d="M12 3a9 9 0 0 1 9 9v3H8l-4 3 1-4a9 9 0 0 1 7-11z" stroke="#fff" strokeWidth="1.800" strokeLinejoin="round" />
    <circle cx="17.500" cy="17.500" r="5" fill="#fff" />
    <path d="M17.500 14.700v5.600M14.700 17.500h5.600" stroke="#1a50e0" strokeWidth="1.600" />
  </Draw>
)

const ScreenClip = () => (
  <Draw size={20}>
    <rect x="2" y="4" width="20" height="15" rx="2" stroke="#d8d8d8" strokeWidth="1.500" strokeDasharray="3 2.500" />
    <circle cx="9" cy="20" r="2" stroke="#d8d8d8" strokeWidth="1.300" />
    <circle cx="15" cy="20" r="2" stroke="#d8d8d8" strokeWidth="1.300" />
    <path d="M9.500 18.500L15 8M14.500 18.500L9 8" stroke="#d8d8d8" strokeWidth="1.300" />
  </Draw>
)

const WindowsLogo = () => (
  <PlainSvg width="17" height="17" viewBox="0 0 17 17" fill="#fff">
    <path d="M0 2.500L7 1.500v6.500H0zM8 1.300L17 0v8H8zM0 9h7v6.500l-7-1zM8 9h9v8l-9-1.300z" />
  </PlainSvg>
)

const TaskViewIcon = () => (
  <Draw size={19}>
    <path d="M3 3h14M3 21h14M21 3v.1M21 21v.1" stroke="#fff" strokeWidth="1.600" />
    <rect x="3" y="8" width="14" height="9" stroke="#fff" strokeWidth="1.600" />
    <path d="M21 8v9" stroke="#fff" strokeWidth="2" strokeDasharray="2 2" />
  </Draw>
)

const ExplorerIcon = () => (
  <Draw size={24}>
    <path d="M2 4h8l2 3h10v14H2z" fill="#f7cd5c" />
    <path d="M2 4h8l2 3H2z" fill="#e2a92a" />
    <path d="M8 21v-6h8v6z" fill="#1f9ae0" />
    <path d="M10 21v-3h4v3z" fill="#0f5fae" />
  </Draw>
)

const CalculatorIcon = () => (
  <Draw size={26}>
    <rect x="4" y="1" width="16" height="22" rx="1.500" fill="#6f7a82" />
    <rect x="6" y="3" width="12" height="4" fill="#4fc3e8" />
    <g fill="#dfe6ea">
      <rect x="6" y="9" width="3.400" height="3.400" />
      <rect x="10.400" y="9" width="3.400" height="3.400" />
      <rect x="6" y="13.500" width="3.400" height="3.400" />
      <rect x="10.400" y="13.500" width="3.400" height="3.400" />
      <rect x="6" y="18" width="3.400" height="3.400" />
      <rect x="10.400" y="18" width="3.400" height="3.400" />
    </g>
    <rect x="14.800" y="9" width="3.400" height="12.400" fill="#1a5ea8" />
  </Draw>
)

const EdgeIcon = () => (
  <Draw size={26}>
    <circle cx="12" cy="12" r="11" fill="#1b8ad0" />
    <path d="M2 9C4 2 12 0 17 2c4 2 6 6 5 11-3 2-6 1-7-1 0-5-8-8-13-3z" fill="#3fd08a" />
    <path d="M12 12c-3 0-5 3-5 6 0 2 2 4 5 5-6 0-10-4-10-9 2-3 6-3 10-2z" fill="#0f5fae" />
    <circle cx="9" cy="17" r="5.500" fill="#8a8f92" />
    <circle cx="9" cy="15.500" r="2" fill="#e6e6e6" />
    <path d="M5.500 20.500c.5-3 6.500-3 7 0z" fill="#e6e6e6" />
  </Draw>
)

const OrangeAppIcon = () => (
  <Draw size={25}>
    <rect x="3" y="2" width="18" height="20" rx="2" stroke="#f08a1d" strokeWidth="1.800" />
    <rect x="3" y="2" width="8" height="8" rx="2" stroke="#f08a1d" strokeWidth="1.800" />
    <path d="M11 10h6v8" stroke="#f08a1d" strokeWidth="1.800" />
    <rect x="14" y="15" width="9" height="9" rx="2" fill="#fff" />
    <path d="M17 17v4.500h3.500" stroke="#f08a1d" strokeWidth="1.500" />
  </Draw>
)

const KiteIcon = () => (
  <Draw size={26}>
    <path d="M12 2l5 5-5 5-5-5z" fill="#e0405a" />
    <path d="M2 12l5-5 5 5-5 5z" fill="#4a90e8" />
    <path d="M12 12l5-5 5 5-5 5z" fill="#6cc04a" />
    <path d="M7 17l5-5 5 5-5 6z" fill="#f4cf3a" />
    <path d="M12 5v13" stroke="#2b2b2b" strokeWidth="1.500" />
    <circle cx="12" cy="17" r="1.800" fill="#2b2b2b" />
  </Draw>
)

const DiscordIcon = () => (
  <Draw size={26}>
    <circle cx="12" cy="12" r="11.500" fill="#5865f2" />
    <path d="M7 8c3-1.300 7-1.300 10 0 1.300 2.300 2 5 1.800 7.500-1.200.9-2.300 1.400-3.300 1.600l-.8-1.300c-1.700.5-3.700.5-5.400 0l-.8 1.300c-1-.2-2.100-.7-3.300-1.600C5 13 5.700 10.300 7 8z" fill="#fff" />
    <circle cx="9.700" cy="12.500" r="1.400" fill="#5865f2" />
    <circle cx="14.300" cy="12.500" r="1.400" fill="#5865f2" />
  </Draw>
)

const DockerIcon = () => (
  <Draw size={26}>
    <circle cx="12" cy="12" r="11.500" fill="#1d8fe0" />
    <path d="M4 12h14c1 0 1.600-.5 2-1.200.6.200 1 .6 1 1-.4.600-1 .9-1.700 1-1.300 3.400-4.200 5.200-8 5.200-3.800 0-6.300-2.200-7.300-6z" fill="#fff" />
    <g fill="#fff">
      <rect x="6" y="9.500" width="2" height="2" />
      <rect x="8.500" y="9.500" width="2" height="2" />
      <rect x="11" y="9.500" width="2" height="2" />
      <rect x="8.500" y="7" width="2" height="2" />
      <rect x="11" y="7" width="2" height="2" />
      <rect x="13.500" y="9.500" width="2" height="2" />
    </g>
  </Draw>
)

const PostgresIcon = () => (
  <Draw size={28}>
    <path d="M4 3c4-2 7-1 8 0 3-2 8-2 9 1 1 4-2 8-3 9 0 2 0 7-3 8-3 1-3-3-3-5-3 0-6-2-6-3-2 2-4-1-4-5 0-3 1-4 2-5z" fill="#5f8aa6" stroke="#b9c6cf" strokeWidth="1" />
    <path d="M12 3c-3 3-2 8 0 13M17 6c1 2 1 5 0 7" stroke="#dfe6ea" strokeWidth="1" />
  </Draw>
)

const BeeIcon = () => (
  <Draw size={26}>
    <path d="M12 1l9 5v12l-9 5-9-5V6z" fill="#f6d32a" />
    <circle cx="12" cy="14" r="5" stroke="#1a1a1a" strokeWidth="2.600" />
    <path d="M9 4v8" stroke="#1a1a1a" strokeWidth="2.600" />
  </Draw>
)

const VSCodeIcon = () => (
  <Draw size={26}>
    <path d="M17 1l6 3v16l-6 3z" fill="#1f9ce8" />
    <path d="M17 1L7 12l10 11 0-6-5-5 5-5z" fill="#0f78c0" />
    <path d="M1 8l2-1.500L17 17v6L1 10zM1 16l2 1.500L9 12l-3-2.500L1 14z" fill="#0f6cb0" />
  </Draw>
)

const PaletteIcon = () => (
  <Draw size={27}>
    <path d="M3 13c0-5 4-8 9-8s8 3 7 7c-.5 2-3 2-4 2s-2 1-1 3c1 3-2 5-5 4-4-1-6-4-6-8z" fill="#d9dfe3" />
    <circle cx="8" cy="11" r="1.600" fill="#e0405a" />
    <circle cx="12" cy="9" r="1.600" fill="#4a90e8" />
    <circle cx="7" cy="15" r="1.600" fill="#4fb04a" />
    <circle cx="16" cy="10" r="1.600" fill="#f4cf3a" />
    <path d="M22 1l-8 19" stroke="#d9973a" strokeWidth="2" />
  </Draw>
)

const SunBadge = () => (
  <PlainSvg width="26" height="26" viewBox="0 0 26 26">
    <circle cx="11" cy="14" r="10" fill="#f28a1e" />
    <path d="M11 4a10 10 0 0 1 0 20 14 14 0 0 0 0-20z" fill="#f8b23a" />
    <circle cx="18" cy="6" r="6" fill="#d8322e" />
    <text x="18" y="9" textAnchor="middle" fontSize="8" fontWeight="700" fontFamily="Roboto, sans-serif" fill="#fff">
      1
    </text>
  </PlainSvg>
)

const CameraTray = () => (
  <Draw size={18}>
    <rect x="3" y="7" width="13" height="10" rx="2" stroke="#fff" strokeWidth="1.400" />
    <path d="M16 11l4-2v6l-4-2z" stroke="#fff" strokeWidth="1.400" />
    <path d="M6 3c2-1 5-1 7 0M6 21c2 1 5 1 7 0" stroke="#fff" strokeWidth="1.400" />
  </Draw>
)

const PowerTray = () => (
  <Draw size={18}>
    <path d="M6 2v4M10 2v4M4 6h8v4a4 4 0 0 1-8 0zM8 14v8" stroke="#fff" strokeWidth="1.400" />
    <rect x="12" y="8" width="11" height="9" stroke="#fff" strokeWidth="1.200" />
    <path d="M15.500 10.500l4 4M19.500 10.500l-4 4" stroke="#fff" strokeWidth="1.200" />
  </Draw>
)

const NotificationBadge = () => (
  <PlainSvg width="28" height="32" viewBox="0 0 28 32">
    <path d="M1 2h16v13H8l-3 4v-4H1z" fill="#fff" />
    <path d="M4 6h10M4 9h10M4 12h7" stroke="#20344a" strokeWidth="1" />
    <circle cx="16" cy="20" r="8.500" fill="#2b2b2b" stroke="#8a8a8a" />
    <text x="16" y="24.500" textAnchor="middle" fontSize="13" fontWeight="700" fontFamily="Roboto, sans-serif" fill="#fff">
      2
    </text>
  </PlainSvg>
)

const PreBadge = styled.div`
  position: absolute;
  right: -2px;
  bottom: -3px;
  padding: 0 2px;
  border-radius: 2px;
  background: #f6c92a;
  font-family: ${ROBOTO};
  font-size: 7px;
  font-weight: 900;
  line-height: 8px;
  color: #1a1a1a;
`

const PreHolder = styled.div`
  position: relative;
  width: 24px;
  flex: none;
`

const BOOKMARKS = [
  { w: 78, icon: <GoogleLogo />, label: 'Google' },
  { w: 84, icon: <YouTubeLogo />, label: 'YouTube' },
  { w: 94, icon: <WhatsAppLogo />, label: 'WhatsApp' },
  { w: 154, icon: <DiamondLogo />, label: 'Sala de Aula | Estaci...' },
  { w: 154, icon: <DiamondLogo />, label: 'SIA - Sistema de Inf...' },
  { w: 137, icon: <MeetLogo />, label: 'Meet: cfg-orxe-shx' },
  { w: 74, icon: <GithubLogo />, label: 'github' },
  { w: 123, icon: <CubosLogo />, label: 'Cubos Academy' },
  { w: 243, icon: <ChallengeLogo />, label: 'Desafio módulo 04 |...' },
]

const CHIPS = [
  'Gerar resumo da página',
  'Obrigado! Ficou ótimo!',
  'Adicione algumas imagens de crianças lendo.',
  'Posso ver uma versão em PDF?',
]

function OutlookPane() {
  return (
    <OutlookWindow>
      <OutlookHeader>
        <WaffleIcon />
        <AppName>Outlook</AppName>
        <SearchBox>
          <Search size={16} strokeWidth={1.4} />
          Pesquisar
        </SearchBox>
        <MeetNow>
          <Video size={18} strokeWidth={1.4} />
          Reunir-se Agora
        </MeetNow>
        <HeaderIcon $w={32}>
          <TeamsIcon />
        </HeaderIcon>
        <Gap $w={16} />
        <HeaderIcon $w={32}>
          <OneNoteIcon />
        </HeaderIcon>
        <Gap $w={5} />
        <Persona>CS</Persona>
      </OutlookHeader>

      <OutlookBody>
        <Rail>
          <RailItem $active>
            <RailMail />
          </RailItem>
          <RailItem>
            <RailCalendar />
          </RailItem>
          <RailItem>
            <RailPeople />
          </RailItem>
          <RailItem>
            <RailTodo />
          </RailItem>
          <RailItem>
            <OfficeTile letter="W" dark="#185abd" colors={['#41a5ee', '#2b7cd3', '#103f91']} />
          </RailItem>
          <RailItem>
            <OfficeTile letter="X" dark="#107c41" colors={['#33c481', '#21a366', '#185c37']} />
          </RailItem>
          <RailItem>
            <RailPowerPoint />
          </RailItem>
          <RailItem>
            <RailApps />
          </RailItem>
        </Rail>

        <Content>
          <RibbonTabs>
            <HeaderIcon $w={22}>
              <Menu size={22} strokeWidth={1} color="#424242" />
            </HeaderIcon>
            <Gap $w={26} />
            <RibbonTab $w={112}>Página Inicial</RibbonTab>
            <RibbonTab $w={66} $active>
              Exibir
            </RibbonTab>
            <RibbonTab $w={60}>Ajuda</RibbonTab>
            <UpNext>
              <Draw size={14}>
                <rect x="2" y="3" width="20" height="18" rx="3" stroke="#555" strokeWidth="1.600" />
                <path d="M2 8h20M7 12h2M11 12h2M15 12h2M7 16h2M11 16h2" stroke="#555" strokeWidth="1.600" />
              </Draw>
              <div>
                Cubos Academy - Desenvol...
                <br />
                18:30
              </div>
            </UpNext>
          </RibbonTabs>

          <ToolRow>
            <ToolCard>
              <Settings size={17} strokeWidth={1.2} color="#0f6cbd" />
              <ToolLabel>Configurações de exibição</ToolLabel>
              <ToolSep $after={12} />
              <Tool $w={24}>
                <Mail size={19} strokeWidth={1.1} />
              </Tool>
              <Tool $w={16}>
                <ChevronDown size={12} strokeWidth={1} />
              </Tool>
              <Tool $w={42}>
                <ListIcon />
              </Tool>
              <Tool $w={38}>
                <ZoomIn size={18} strokeWidth={1.1} />
              </Tool>
              <Tool $w={42}>
                <RotateCw size={17} strokeWidth={1.1} />
              </Tool>
              <Gap $w={3} />
              <ToolSep $after={12} />
              <Tool $w={24}>
                <Columns2 size={18} strokeWidth={1.1} />
              </Tool>
              <Tool $w={20}>
                <ChevronDown size={12} strokeWidth={1} />
              </Tool>
              <Gap $w={5} />
              <Tool $w={26}>
                <LinesIcon />
              </Tool>
              <Tool $w={12}>
                <ChevronDown size={12} strokeWidth={1} />
              </Tool>
              <Gap $w={7} />
              <ToolSep $after={12} />
              <Tool $w={26}>
                <ImmersiveIcon />
              </Tool>
              <Gap $w={10} />
              <ToolSep $after={12} />
              <Tool $w={24}>
                <Ellipsis size={18} strokeWidth={1.6} color="#424242" />
              </Tool>
            </ToolCard>
            <ScrollHint>
              <ChevronDown size={15} strokeWidth={1} />
            </ScrollHint>
          </ToolRow>

          <SubjectCard>Solicitação de Reunião para Financiamento de Negócio de Limpeza Comercial</SubjectCard>

          <MessageRow>
            <MessageCard>
              <MessageHead>
                <Avatar>CS</Avatar>
                <Meta>
                  <MetaLine>
                    <span>Cristiane Sá</span>
                    <Actions>
                      <Action $w={29}>
                        <Reply size={16} strokeWidth={1.1} color="#b35cc8" />
                      </Action>
                      <Action $w={29}>
                        <ReplyAll size={16} strokeWidth={1.1} color="#b35cc8" />
                      </Action>
                      <Action $w={29}>
                        <Forward size={16} strokeWidth={1.1} color="#3a96dd" />
                      </Action>
                      <ActionSep />
                      <Action $w={28}>
                        <GridChip />
                      </Action>
                      <ActionSep />
                      <Gap $w={6} />
                      <Action $w={16}>
                        <Ellipsis size={14} strokeWidth={1.6} color="#424242" />
                      </Action>
                    </Actions>
                  </MetaLine>
                  <MetaLine>
                    <span>Para:&nbsp; Você</span>
                    <SentAt>Qui, 22/08/2024 11:59</SentAt>
                  </MetaLine>
                </Meta>
              </MessageHead>
              <MailText>
                <p>Prezado(a) [Nome do Banqueiro de Investimentos],</p>
                <p>
                  Espero que esta mensagem o(a) encontre bem. Estou escrevendo para solicitar uma reunião para discutir oportunidades de financiamento
                  <br />
                  para o meu negócio de limpeza comercial, que está prestes a expandir. Nossa abordagem inovadora para serviços de limpeza ecológicos tem
                  <br />
                  gerado um interesse significativo dos clientes, e agora estamos buscando escalar nossas operações para atender à demanda crescente.
                </p>
                <p>
                  Acredito que uma parceria com sua estimada instituição poderia ser mutuamente benéfica. Estou disponível para uma reunião na sua
                  <br />
                  conveniência e aguardo com expectativa a discussão sobre como podemos colaborar para alcançar o sucesso compartilhado.
                </p>
                <p>
                  Agradeço por considerar minha solicitação. Estou ansioso para apresentar nosso plano de negócios detalhado e projeções financeiras para
                  <br />
                  sua análise.
                </p>
                <p>Atenciosamente,</p>
                <p>
                  <br />
                  Cristiane Sá
                  <br />
                  Limpeza Responsável
                </p>
              </MailText>
            </MessageCard>
            <ScrollTrack>
              <ScrollThumb />
              <ChevronDown size={10} strokeWidth={1.5} color="#707070" />
            </ScrollTrack>
          </MessageRow>

          <AdRow>
            <AdSide>
              <AdBadge>Anúncio</AdBadge>
              <AdChoices />
            </AdSide>
            <AdPanel>
              <ArrowLeft size={14} strokeWidth={1.1} color="#777" />
              <AdInner>
                <AdText>Anúncio fechado pela</AdText>
                <Criteo>CRITEO</Criteo>
                <ReportButton>
                  Denunciar este
                  <br />
                  anúncio
                </ReportButton>
                <ChoicesButton>
                  Ad choices
                  <AdChoices />
                </ChoicesButton>
              </AdInner>
            </AdPanel>
          </AdRow>
        </Content>
      </OutlookBody>
    </OutlookWindow>
  )
}

function CopilotPane() {
  return (
    <CopilotPanel>
      <PanelTop>
        <PanelTab $w={74} $active>
          <ChatBubble />
          Chat
        </PanelTab>
        <PanelTab $w={80}>
          <SquarePen size={15} strokeWidth={1.4} color="#2a9ae0" />
          Redação
        </PanelTab>
        <PanelTools>
          <PanelTool>
            <SquareArrowOutUpRight size={16} strokeWidth={1.3} />
          </PanelTool>
          <PanelTool>
            <RotateCw size={16} strokeWidth={1.3} />
          </PanelTool>
          <PanelTool>
            <EllipsisVertical size={16} strokeWidth={1.6} />
          </PanelTool>
          <PanelTool>
            <X size={18} strokeWidth={1.2} />
          </PanelTool>
        </PanelTools>
      </PanelTop>

      <Conversation>
        <ConversationTitle>Evento de Promoção da Alfabetização Infa...</ConversationTitle>
        <WidgetIcon />
        <HeaderIcon $w={44}>
          <History size={17} strokeWidth={1.4} />
        </HeaderIcon>
      </Conversation>

      <Bot>
        <CopilotLogo size={25} />
        Copilot
      </Bot>

      <Answer>
        <Source>
          Com <b>a web</b>
          <ChevronDown size={14} strokeWidth={1.2} color="#a9b9ee" />
        </Source>
        <Progress>
          <Check size={26} strokeWidth={1.4} color="#1aa51a" />
          Gerando respostas para você...
        </Progress>
        <div>
          Vou criar uma apresentação para você. Um
          <br />
          momento, por favor.
        </div>
        <Feedback>
          <FeedbackIcon>
            <ThumbsUp size={19} strokeWidth={1.3} />
          </FeedbackIcon>
          <FeedbackIcon>
            <ThumbsDown size={19} strokeWidth={1.3} />
          </FeedbackIcon>
          <FeedbackIcon>
            <PagesIcon />
          </FeedbackIcon>
          <FeedbackIcon>
            <SaveIcon />
          </FeedbackIcon>
          <FeedbackIcon>
            <ShareOutIcon />
          </FeedbackIcon>
          <FeedbackIcon>
            <Volume2 size={23} strokeWidth={1.2} />
          </FeedbackIcon>
          <Counter>
            <i />
            12 de 30
          </Counter>
        </Feedback>
      </Answer>

      <Chips>
        {CHIPS.map(label => (
          <Chip key={label}>{label}</Chip>
        ))}
      </Chips>

      <ComposerRow>
        <NewTopic>
          <NewTopicIcon />
        </NewTopic>
        <Composer>
          <ComposerHead>
            <Info size={13} strokeWidth={1.2} />
            <ComposerHeadLabel>Com fontes relevantes</ComposerHeadLabel>
            <ChevronDown size={14} strokeWidth={1.1} />
          </ComposerHead>
          <Placeholder>Pergunte-me qualquer coisa ou digite "@"</Placeholder>
          <ComposerTools>
            <ComposerTool $w={36}>
              <ImagePlus size={19} strokeWidth={1.4} />
            </ComposerTool>
            <ComposerTool $w={36}>
              <ScreenClip />
            </ComposerTool>
            <Gap $w={4} />
            <VBar />
            <ComposerTool $w={45}>
              <Mic size={20} strokeWidth={1.5} />
            </ComposerTool>
            <ComposerTool $w={24}>
              <SendHorizontal size={20} strokeWidth={1.1} color="#7a7a7a" />
            </ComposerTool>
          </ComposerTools>
        </Composer>
      </ComposerRow>
    </CopilotPanel>
  )
}

function WindowsTaskbar() {
  return (
    <Taskbar>
      <StartButton>
        <WindowsLogo />
      </StartButton>
      <TaskSearch>
        <MirroredSearch size={21} strokeWidth={1.1} />
        Pesquisar
      </TaskSearch>
      <TaskApp>
        <TaskViewIcon />
      </TaskApp>
      <Gap $w={5} />
      <TaskApp $running>
        <ExplorerIcon />
      </TaskApp>
      <TaskApp>
        <CalculatorIcon />
      </TaskApp>
      <TaskApp $active>
        <EdgeIcon />
      </TaskApp>
      <TaskApp>
        <HexCopilot size={25} />
      </TaskApp>
      <TaskApp>
        <OrangeAppIcon />
      </TaskApp>
      <TaskApp $running>
        <KiteIcon />
      </TaskApp>
      <TaskApp>
        <DiscordIcon />
      </TaskApp>
      <TaskApp>
        <DockerIcon />
      </TaskApp>
      <TaskApp>
        <PostgresIcon />
      </TaskApp>
      <TaskApp>
        <BeeIcon />
      </TaskApp>
      <TaskApp $running>
        <VSCodeIcon />
      </TaskApp>
      <TaskApp $running>
        <PaletteIcon />
      </TaskApp>
      <Gap $w={23} />
      <Weather>
        <SunBadge />
        29°C
      </Weather>
      <Gap $w={20} />
      <TrayIcon $w={24}>
        <ChevronUp size={18} strokeWidth={1.4} />
      </TrayIcon>
      <TrayIcon $w={26}>
        <CameraTray />
      </TrayIcon>
      <TrayIcon $w={20}>
        <PowerTray />
      </TrayIcon>
      <TrayIcon $w={32}>
        <Wifi size={15} strokeWidth={1.3} />
      </TrayIcon>
      <TrayIcon $w={10}>
        <Volume2 size={16} strokeWidth={1.3} />
      </TrayIcon>
      <Gap $w={10} />
      <Stacked $w={34} $size={12}>
        POR
        <br />
        PTB2
      </Stacked>
      <Stacked $w={70} $size={11.2}>
        14:14
        <br />
        22/08/2024
      </Stacked>
      <TrayIcon $w={48}>
        <NotificationBadge />
      </TrayIcon>
      <TrayIcon $w={24}>
        <PreHolder>
          <CopilotLogo />
          <PreBadge>PRE</PreBadge>
        </PreHolder>
      </TrayIcon>
    </Taskbar>
  )
}

export default function App() {
  return (
    <>
      <GlobalStyle />
      <Page>
        <TabStrip />
        <BrowserBar>
          <Slot>
            <ArrowLeft size={22} strokeWidth={1.2} />
          </Slot>
          <Slot>
            <RotateCw size={19} strokeWidth={1.2} />
          </Slot>
          <Slot>
            <House size={18} strokeWidth={1.2} />
          </Slot>
          <AddressBar>
            <Lock size={16} strokeWidth={1.3} color="#e6e6e6" />
            <Url>
              https://<b>outlook.live.com</b>/mail/0/inbox/id/AQQkADAwATM3ZmYAZS03NTEzLTVkNDctMDACLTAwCgA...
            </Url>
            <Slot $w={48}>
              <Draw size={16}>
                <path d="M12 3l9 9-9 9-9-9z" stroke="#a8a8a8" strokeWidth="2" />
                <path d="M12 8l4 4-4 4-4-4z" fill="#a8a8a8" />
              </Draw>
            </Slot>
            <Slot $w={48}>
              <ClipboardX size={18} strokeWidth={1.2} color="#a8a8a8" />
            </Slot>
            <Slot $w={48}>
              <GridPlus />
            </Slot>
            <Slot $w={30}>
              <ReadAloud />
            </Slot>
            <Slot $w={54}>
              <Star size={19} strokeWidth={1.2} color="#a8a8a8" />
            </Slot>
          </AddressBar>
          <Slot>
            <AvatarFace />
          </Slot>
          <Slot>
            <Puzzle size={20} strokeWidth={1.3} />
          </Slot>
          <VBar />
          <Slot $w={47}>
            <Columns2 size={19} strokeWidth={1.3} />
          </Slot>
          <Slot>
            <CollectionIcon />
          </Slot>
          <Slot>
            <HealthIcon />
          </Slot>
          <Slot>
            <Ellipsis size={18} strokeWidth={1.6} />
          </Slot>
          <CopilotButton>
            <CopilotLogo size={24} />
          </CopilotButton>
        </BrowserBar>

        <Stage>
          <LeftColumn>
            <Bookmarks>
              {BOOKMARKS.map(b => (
                <Bookmark key={b.label} $w={b.w}>
                  {b.icon}
                  {b.label}
                </Bookmark>
              ))}
              <ChevronRight size={20} strokeWidth={1.1} color="#d8d8d8" />
              <Slot $w={12} />
              <VBar />
              <Slot $w={12} />
              <Bookmark $w={120}>
                <FolderLogo />
                Outros favoritos
              </Bookmark>
            </Bookmarks>
            <Workspace>
              <OutlookPane />
              <CopilotPane />
            </Workspace>
          </LeftColumn>

          <EdgeSidebar>
            <SideIcon>
              <BingSearch />
            </SideIcon>
            <SideIcon>
              <HexCopilot />
            </SideIcon>
            <SideIcon>
              <OutlookLogo />
            </SideIcon>
            <SideRule $top="10px" $bottom="10px" />
            <SideIcon>
              <Plus size={18} strokeWidth={1.2} />
            </SideIcon>
            <SideRule $top="auto" />
            <SideIcon>
              <Settings size={18} strokeWidth={1.2} />
            </SideIcon>
          </EdgeSidebar>
        </Stage>

        <WindowsTaskbar />
      </Page>
    </>
  )
}
